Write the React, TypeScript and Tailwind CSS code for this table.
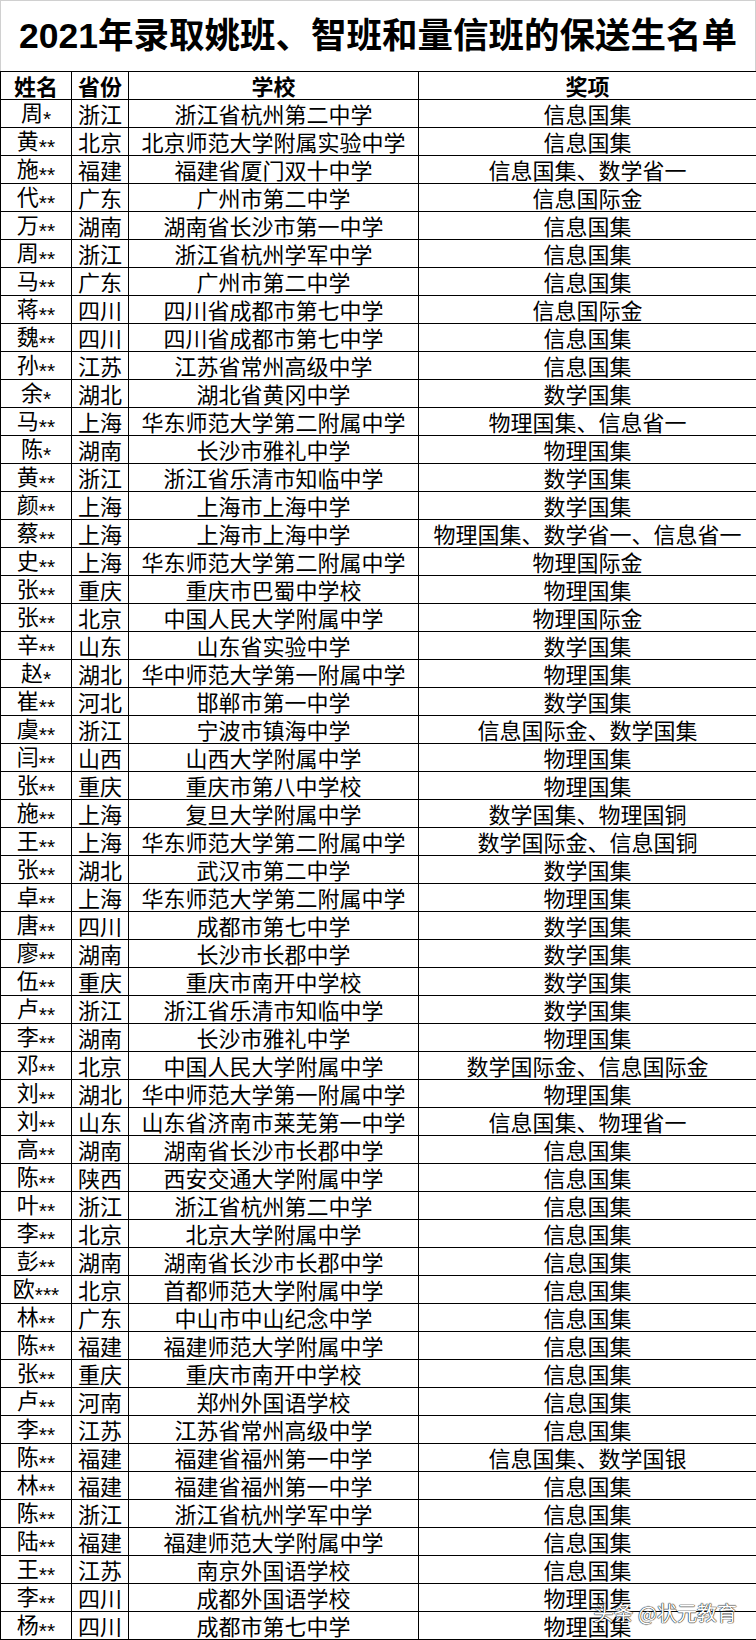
import React from 'react';

const rows: [string, string, string, string][] = [
  ['周*', '浙江', '浙江省杭州第二中学', '信息国集'],
  ['黄**', '北京', '北京师范大学附属实验中学', '信息国集'],
  ['施**', '福建', '福建省厦门双十中学', '信息国集、数学省一'],
  ['代**', '广东', '广州市第二中学', '信息国际金'],
  ['万**', '湖南', '湖南省长沙市第一中学', '信息国集'],
  ['周**', '浙江', '浙江省杭州学军中学', '信息国集'],
  ['马**', '广东', '广州市第二中学', '信息国集'],
  ['蒋**', '四川', '四川省成都市第七中学', '信息国际金'],
  ['魏**', '四川', '四川省成都市第七中学', '信息国集'],
  ['孙**', '江苏', '江苏省常州高级中学', '信息国集'],
  ['余*', '湖北', '湖北省黄冈中学', '数学国集'],
  ['马**', '上海', '华东师范大学第二附属中学', '物理国集、信息省一'],
  ['陈*', '湖南', '长沙市雅礼中学', '物理国集'],
  ['黄**', '浙江', '浙江省乐清市知临中学', '数学国集'],
  ['颜**', '上海', '上海市上海中学', '数学国集'],
  ['蔡**', '上海', '上海市上海中学', '物理国集、数学省一、信息省一'],
  ['史**', '上海', '华东师范大学第二附属中学', '物理国际金'],
  ['张**', '重庆', '重庆市巴蜀中学校', '物理国集'],
  ['张**', '北京', '中国人民大学附属中学', '物理国际金'],
  ['辛**', '山东', '山东省实验中学', '数学国集'],
  ['赵*', '湖北', '华中师范大学第一附属中学', '物理国集'],
  ['崔**', '河北', '邯郸市第一中学', '数学国集'],
  ['虞**', '浙江', '宁波市镇海中学', '信息国际金、数学国集'],
  ['闫**', '山西', '山西大学附属中学', '物理国集'],
  ['张**', '重庆', '重庆市第八中学校', '物理国集'],
  ['施**', '上海', '复旦大学附属中学', '数学国集、物理国铜'],
  ['王**', '上海', '华东师范大学第二附属中学', '数学国际金、信息国铜'],
  ['张**', '湖北', '武汉市第二中学', '数学国集'],
  ['卓**', '上海', '华东师范大学第二附属中学', '物理国集'],
  ['唐**', '四川', '成都市第七中学', '数学国集'],
  ['廖**', '湖南', '长沙市长郡中学', '数学国集'],
  ['伍**', '重庆', '重庆市南开中学校', '数学国集'],
  ['卢**', '浙江', '浙江省乐清市知临中学', '数学国集'],
  ['李**', '湖南', '长沙市雅礼中学', '物理国集'],
  ['邓**', '北京', '中国人民大学附属中学', '数学国际金、信息国际金'],
  ['刘**', '湖北', '华中师范大学第一附属中学', '物理国集'],
  ['刘**', '山东', '山东省济南市莱芜第一中学', '信息国集、物理省一'],
  ['高**', '湖南', '湖南省长沙市长郡中学', '信息国集'],
  ['陈**', '陕西', '西安交通大学附属中学', '信息国集'],
  ['叶**', '浙江', '浙江省杭州第二中学', '信息国集'],
  ['李**', '北京', '北京大学附属中学', '信息国集'],
  ['彭**', '湖南', '湖南省长沙市长郡中学', '信息国集'],
  ['欧***', '北京', '首都师范大学附属中学', '信息国集'],
  ['林**', '广东', '中山市中山纪念中学', '信息国集'],
  ['陈**', '福建', '福建师范大学附属中学', '信息国集'],
  ['张**', '重庆', '重庆市南开中学校', '信息国集'],
  ['卢**', '河南', '郑州外国语学校', '信息国集'],
  ['李**', '江苏', '江苏省常州高级中学', '信息国集'],
  ['陈**', '福建', '福建省福州第一中学', '信息国集、数学国银'],
  ['林**', '福建', '福建省福州第一中学', '信息国集'],
  ['陈**', '浙江', '浙江省杭州学军中学', '信息国集'],
  ['陆**', '福建', '福建师范大学附属中学', '信息国集'],
  ['王**', '江苏', '南京外国语学校', '信息国集'],
  ['李**', '四川', '成都外国语学校', '物理国集'],
  ['杨**', '四川', '成都市第七中学', '物理国集'],
];

const Cell = ({ children, head }: { children: React.ReactNode; head?: boolean }) => (
  <div
    className={`h-[27px] flex items-center justify-center whitespace-nowrap leading-[27px] ${
      head ? 'font-bold' : ''
    }`}
  >
    {children}
  </div>
);

const Name = ({ value }: { value: string }) => (
  <span>
    {value.slice(0, 1)}
    <span className="font-['Liberation_Sans',sans-serif] text-[21px] leading-none align-[-5px]">{value.slice(1)}</span>
  </span>
);

const td = 'border border-black p-0 text-center align-middle';

export default function App() {
  return (
    <div className="relative w-[756px] h-[1640px] bg-white overflow-hidden font-['Noto_Sans_CJK_SC','Liberation_Sans',sans-serif] text-black">
      {/* 标题 */}
      <div className="h-[71px] border-t border-x border-[#d0d0d0] flex items-center justify-center">
        <h1 className="text-[35.5px] font-bold leading-[44px] font-['Liberation_Sans','Noto_Sans_CJK_SC',sans-serif]">
          2021年录取姚班、智班和量信班的保送生名单
        </h1>
      </div>

      <table className="w-[756px] table-fixed border-collapse text-[22px]">
        <colgroup>
          <col className="w-[71px]" />
          <col className="w-[57px]" />
          <col className="w-[290px]" />
          <col className="w-[338px]" />
        </colgroup>
        <thead>
          <tr>
            {['姓名', '省份', '学校', '奖项'].map((h) => (
              <th key={h} className={td}>
                <Cell head>{h}</Cell>
              </th>
            ))}
          </tr>
        </thead>
        <tbody>
          {rows.map(([name, prov, school, award], i) => (
            <tr key={i}>
              <td className={td}>
                <Cell>
                  <Name value={name} />
                </Cell>
              </td>
              <td className={td}>
                <Cell>{prov}</Cell>
              </td>
              <td className={td}>
                <Cell>{school}</Cell>
              </td>
              <td className={td}>
                <Cell>{award}</Cell>
              </td>
            </tr>
          ))}
        </tbody>
      </table>

      {/* 水印 */}
      <div className="absolute right-[19px] bottom-[17px] text-[20px] leading-none text-white [text-shadow:0_0_1px_#222,0_0_1px_#222,0_0_1px_#222] font-['Noto_Sans_CJK_SC',sans-serif]">
        头条 @状元教育
      </div>
    </div>
  );
}
